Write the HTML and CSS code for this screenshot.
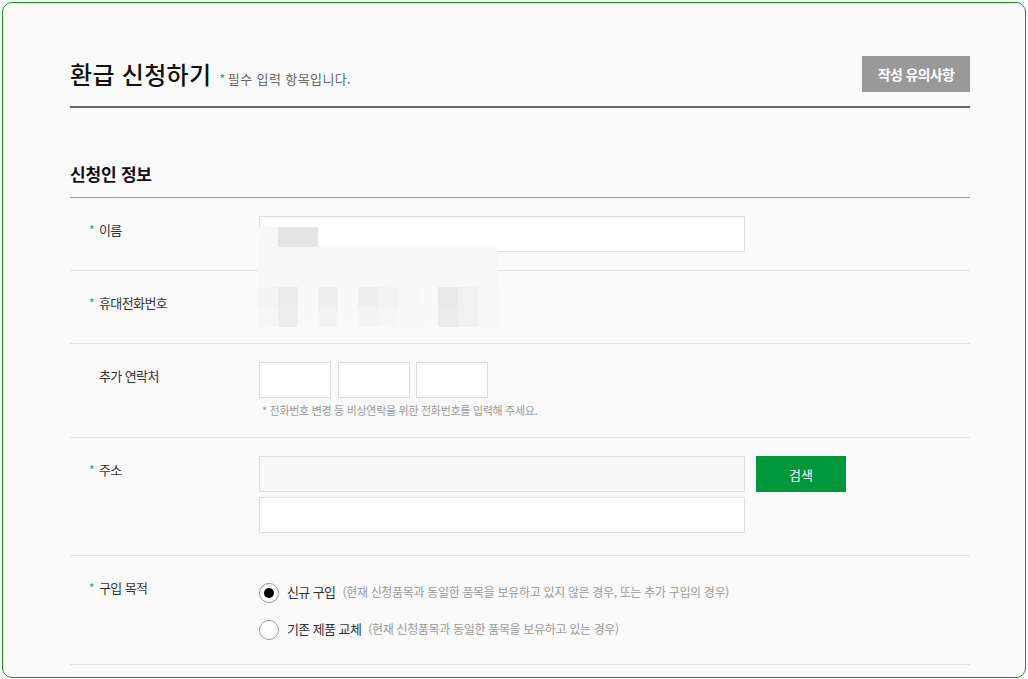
FILE: index.html
```html
<!DOCTYPE html>
<html lang="ko">
  <head>
    <meta charset="UTF-8" />
    <meta name="viewport" content="width=device-width, initial-scale=1.0" />
    <title>환급 신청하기</title>
    <link rel="stylesheet" href="styles.css">
  </head>
  <body>
    <div class="frame">
      <div class="page-head">
        <div class="page-title">
          <h2>환급 신청하기</h2>
          <span class="required-note"><em>*</em>필수 입력 항목입니다.</span>
        </div>
        <button class="guide-button">작성 유의사항</button>
      </div>

      <div class="section">
        <h3 class="section-title">신청인 정보</h3>

        <div class="form">
          <div class="row">
            <div class="label"><em>*</em>이름</div>
            <div class="field">
              <input class="input wide" type="text" />
            </div>
          </div>

          <div class="row">
            <div class="label"><em>*</em>휴대전화번호</div>
            <div class="field">
              <div class="empty-line"></div>
            </div>
          </div>

          <div class="row">
            <div class="label plain">추가 연락처</div>
            <div class="field">
              <div class="phone-group">
                <input class="input short" type="text" />
                <input class="input short" type="text" />
                <input class="input short" type="text" />
              </div>
              <p class="help">* 전화번호 변경 등 비상연락을 위한 전화번호를 입력해 주세요.</p>
            </div>
          </div>

          <div class="row">
            <div class="label"><em>*</em>주소</div>
            <div class="field address">
              <div class="address-line">
                <input class="input wide readonly" type="text" readonly />
                <button class="search-button">검색</button>
              </div>
              <input class="input wide" type="text" />
            </div>
          </div>

          <div class="row">
            <div class="label"><em>*</em>구입 목적</div>
            <div class="field options">
              <label class="option">
                <input type="radio" name="purpose" checked />
                <span class="option-name">신규 구입</span>
                <span class="option-desc">(현재 신청품목과 동일한 품목을 보유하고 있지 않은 경우, 또는 추가 구입의 경우)</span>
              </label>
              <label class="option">
                <input type="radio" name="purpose" />
                <span class="option-name">기존 제품 교체</span>
                <span class="option-desc">(현재 신청품목과 동일한 품목을 보유하고 있는 경우)</span>
              </label>
            </div>
          </div>

          <!-- blurred personal data -->
          <div class="mosaic">
            <i style="background:#f8f8f8"></i><i style="background:#e5e5e5"></i><i style="background:#e5e5e5"></i><i></i><i></i><i></i><i></i><i></i><i></i><i></i><i></i><i></i>
            <i class="fill"></i><i class="fill"></i><i class="fill"></i><i class="fill"></i><i class="fill"></i><i class="fill"></i><i class="fill"></i><i class="fill"></i><i class="fill"></i><i class="fill"></i><i class="fill"></i><i class="fill"></i>
            <i class="fill"></i><i class="fill"></i><i class="fill"></i><i class="fill"></i><i class="fill"></i><i class="fill"></i><i class="fill"></i><i class="fill"></i><i class="fill"></i><i class="fill"></i><i class="fill"></i><i class="fill"></i>
            <i style="background:#f4f4f4"></i><i style="background:#ececec"></i><i style="background:#f8f9f8"></i><i style="background:#efefef"></i><i style="background:#f9f9f9"></i><i style="background:#efefef"></i><i style="background:#f3f3f3"></i><i style="background:#f7f7f7"></i><i style="background:#f9f9f9"></i><i style="background:#e9e9e9"></i><i style="background:#f1f1f1"></i><i style="background:#f8f8f8"></i>
            <i style="background:#f6f6f4"></i><i style="background:#ededeb"></i><i style="background:#f8f9f8"></i><i style="background:#f3f3f3"></i><i style="background:#f9f9f9"></i><i style="background:#f4f4f4"></i><i style="background:#f6f6f6"></i><i style="background:#f8f8f8"></i><i style="background:#f9f9f9"></i><i style="background:#ebebea"></i><i style="background:#f0f1f0"></i><i style="background:#f8f8f8"></i>
          </div>
        </div>
      </div>
    </div>
  </body>
</html>
```

FILE: styles.css
```css
body {
  margin: 0;
  padding: 0;
  background: #fff;
  font-family: "Noto Sans CJK KR", "Noto Sans", sans-serif;
  color: #333;
}

.frame {
  margin: 2px;
  height: 676px;
  box-sizing: border-box;
  border: 1px solid #119a1a;
  border-radius: 10px;
  background: #fafafa;
  padding: 53px 55px 0 67px;
  overflow: hidden;
}

em {
  font-style: normal;
  color: #26a37c;
}

/* page header */
.page-head {
  display: flex;
  justify-content: space-between;
  align-items: center;
  padding-bottom: 14px;
  border-bottom: 2px solid #666;
}

.page-title {
  display: flex;
  align-items: baseline;
}

.page-title h2 {
  margin: 0;
  font-size: 24px;
  font-weight: 500;
  letter-spacing: 0.3px;
  color: #111;
  line-height: 36px;
}

.required-note {
  margin-left: 8px;
  font-size: 13px;
  color: #666;
  letter-spacing: 0.4px;
}

.required-note em {
  margin-right: 2px;
}

.guide-button {
  width: 108px;
  height: 36px;
  border: none;
  background: #999;
  color: #fff;
  font-family: inherit;
  font-size: 14px;
  font-weight: 700;
  letter-spacing: -0.7px;
  cursor: pointer;
}

/* section */
.section-title {
  margin: 54px 0 0 0;
  padding-bottom: 11px;
  font-size: 17px;
  font-weight: 700;
  line-height: 24px;
  letter-spacing: -0.2px;
  color: #111;
  border-bottom: 1px solid #999;
}

.form {
  position: relative;
}

.row {
  display: flex;
  padding: 18px 0;
  border-bottom: 1px solid #e3e3e3;
}

.label {
  width: 170px;
  flex-shrink: 0;
  padding-left: 19px;
  margin-top: 4px;
  font-size: 13px;
  line-height: 20px;
  letter-spacing: -0.6px;
}

.label em {
  display: inline-block;
  width: 10px;
  font-size: 12px;
}

.label.plain {
  padding-left: 29px;
  width: 160px;
}

.field {
  flex: 1;
}

.input {
  display: block;
  box-sizing: border-box;
  height: 36px;
  border: 1px solid #ddd;
  background: #fff;
  padding: 0 10px;
  font-family: inherit;
  font-size: 13px;
  outline: none;
}

.input.wide {
  width: 486px;
}

.input.short {
  width: 72px;
}

.input.readonly {
  background: #f9f9f9;
}

.empty-line {
  height: 36px;
}

.phone-group {
  display: flex;
  gap: 6.5px;
}

.help {
  margin: 4px 0 1px 3px;
  font-size: 11px;
  line-height: 16px;
  color: #999;
  letter-spacing: -0.3px;
}

.address {
  display: flex;
  flex-direction: column;
  gap: 5px;
  margin-bottom: 4px;
}

.address-line {
  display: flex;
  gap: 11px;
}

.search-button {
  width: 90px;
  height: 36px;
  border: none;
  background: #00963c;
  color: #fff;
  font-family: inherit;
  font-size: 13px;
  cursor: pointer;
}

.options {
  display: flex;
  flex-direction: column;
  gap: 17px;
  margin: 9px 0 6px 0;
}

.option {
  display: flex;
  align-items: center;
  height: 20px;
  line-height: 16px;
  cursor: pointer;
}

.option span {
  margin-top: -3px;
}

.option input {
  appearance: none;
  -webkit-appearance: none;
  margin: 0 8px 0 0;
  width: 20px;
  height: 20px;
  border: 1px solid #999;
  border-radius: 50%;
  background: #fff;
  box-sizing: border-box;
  position: relative;
}

.option input:checked::after {
  content: "";
  position: absolute;
  left: 4px;
  top: 4px;
  width: 10px;
  height: 10px;
  border-radius: 50%;
  background: #000;
}

.option-name {
  font-size: 13px;
  letter-spacing: -0.6px;
  color: #333;
}

.option-desc {
  margin-left: 7px;
  font-size: 12px;
  letter-spacing: -0.33px;
  color: #999;
}

/* privacy blur over the name / phone fields */
.mosaic {
  position: absolute;
  left: 188px;
  top: 29px;
  display: grid;
  grid-template-columns: repeat(12, 20px);
  grid-auto-rows: 20px;
}

.mosaic .fill {
  background: #f7f7f7;
}
```
